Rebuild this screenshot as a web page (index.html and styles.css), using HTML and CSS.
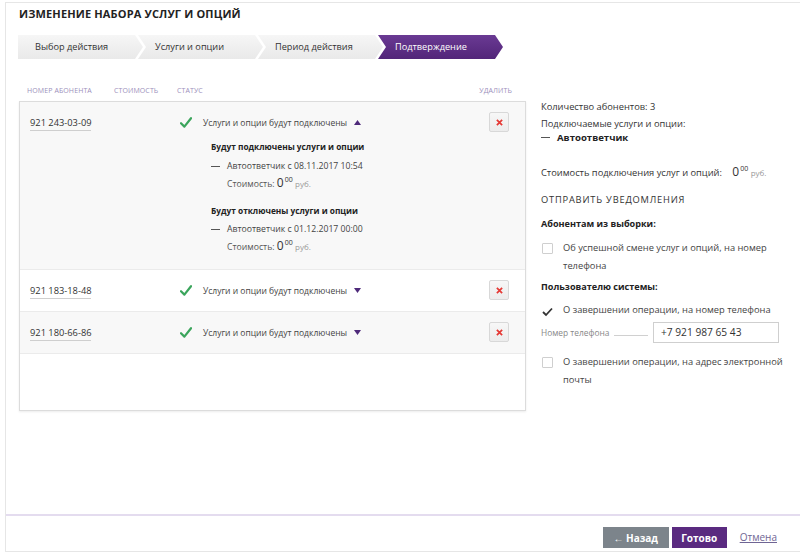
FILE: index.html
```html
<!DOCTYPE html>
<html lang="ru">
<head>
<meta charset="utf-8">
<title>Изменение набора услуг и опций</title>
<link rel="stylesheet" href="styles.css">
</head>
<body>
<div class="modal">
  <header class="head">
    <h1 class="title">ИЗМЕНЕНИЕ НАБОРА УСЛУГ И ОПЦИЙ</h1>
    <ol class="steps">
      <li class="step first">Выбор действия</li>
      <li class="step">Услуги и опции</li>
      <li class="step">Период действия</li>
      <li class="step active">Подтверждение</li>
    </ol>
  </header>

  <main class="content">
    <section class="left">
      <div class="thead">
        <span class="th th-num">НОМЕР АБОНЕНТА</span>
        <span class="th th-cost">СТОИМОСТЬ</span>
        <span class="th th-status">СТАТУС</span>
        <span class="th th-del">УДАЛИТЬ</span>
      </div>
      <div class="tbox">
        <div class="row shaded">
          <div class="row-main">
            <span class="num">921 243-03-09</span>
            <svg class="check" viewBox="0 0 12 11" width="12" height="11"><path d="M1 6.2 L4.4 9.6 L11 1.2" fill="none" stroke="#3ba55c" stroke-width="2.2" stroke-linecap="round" stroke-linejoin="round"/></svg>
            <span class="status">Услуги и опции будут подключены</span>
            <svg class="caret" viewBox="0 0 7 5" width="7" height="5"><path d="M0 5 L3.5 0 L7 5 Z" fill="#4e2a7a"/></svg>
            <button class="del" type="button"><svg viewBox="0 0 8 8" width="7" height="7"><path d="M1 1 L7 7 M7 1 L1 7" stroke="#e53935" stroke-width="2"/></svg></button>
          </div>
          <div class="details">
            <div class="d-head">Будут подключены услуги и опции</div>
            <div class="d-item"><span class="dash"></span>Автоответчик с 08.11.2017 10:54</div>
            <div class="d-cost">Стоимость: <span class="price">0<sup>00</sup></span> <span class="rub">руб.</span></div>
            <div class="d-head second">Будут отключены услуги и опции</div>
            <div class="d-item tight"><span class="dash"></span>Автоответчик с 01.12.2017 00:00</div>
            <div class="d-cost">Стоимость: <span class="price">0<sup>00</sup></span> <span class="rub">руб.</span></div>
          </div>
        </div>
        <div class="row">
          <div class="row-main">
            <span class="num">921 183-18-48</span>
            <svg class="check" viewBox="0 0 12 11" width="12" height="11"><path d="M1 6.2 L4.4 9.6 L11 1.2" fill="none" stroke="#3ba55c" stroke-width="2.2" stroke-linecap="round" stroke-linejoin="round"/></svg>
            <span class="status">Услуги и опции будут подключены</span>
            <svg class="caret" viewBox="0 0 7 5" width="7" height="5"><path d="M0 0 L7 0 L3.5 5 Z" fill="#4e2a7a"/></svg>
            <button class="del" type="button"><svg viewBox="0 0 8 8" width="7" height="7"><path d="M1 1 L7 7 M7 1 L1 7" stroke="#e53935" stroke-width="2"/></svg></button>
          </div>
        </div>
        <div class="row shaded">
          <div class="row-main">
            <span class="num">921 180-66-86</span>
            <svg class="check" viewBox="0 0 12 11" width="12" height="11"><path d="M1 6.2 L4.4 9.6 L11 1.2" fill="none" stroke="#3ba55c" stroke-width="2.2" stroke-linecap="round" stroke-linejoin="round"/></svg>
            <span class="status">Услуги и опции будут подключены</span>
            <svg class="caret" viewBox="0 0 7 5" width="7" height="5"><path d="M0 0 L7 0 L3.5 5 Z" fill="#4e2a7a"/></svg>
            <button class="del" type="button"><svg viewBox="0 0 8 8" width="7" height="7"><path d="M1 1 L7 7 M7 1 L1 7" stroke="#e53935" stroke-width="2"/></svg></button>
          </div>
        </div>
      </div>
    </section>

    <aside class="right">
      <p class="r-line">Количество абонентов: 3</p>
      <p class="r-line">Подключаемые услуги и опции:</p>
      <p class="r-service"><span class="dash"></span>Автоответчик</p>
      <p class="r-cost">Стоимость подключения услуг и опций: <span class="price big">0<sup>00</sup></span> <span class="rub">руб.</span></p>
      <h2 class="r-title">ОТПРАВИТЬ УВЕДОМЛЕНИЯ</h2>
      <h3 class="r-sub">Абонентам из выборки:</h3>
      <label class="cb"><span class="box"></span><span class="cb-text">Об успешной смене услуг и опций, на номер телефона</span></label>
      <h3 class="r-sub second">Пользователю системы:</h3>
      <label class="cb single"><span class="box checked"><svg viewBox="0 0 11 10" width="11" height="10"><path d="M1 5 L4 8 L10 1.5" fill="none" stroke="#333" stroke-width="1.8"/></svg></span><span class="cb-text">О завершении операции, на номер телефона</span></label>
      <div class="phone">
        <span class="phone-label">Номер телефона</span>
        <span class="leader"></span>
        <span class="input">+7 921 987 65 43</span>
      </div>
      <label class="cb last"><span class="box"></span><span class="cb-text">О завершении операции, на адрес электронной почты</span></label>
    </aside>
  </main>

  <footer class="foot">
    <button class="btn back" type="button">← Назад</button>
    <button class="btn done" type="button">Готово</button>
    <a class="cancel" href="#">Отмена</a>
  </footer>
</div>
</body>
</html>
```

FILE: styles.css
```css
* { box-sizing: border-box; margin: 0; padding: 0; }
html, body { width: 800px; height: 554px; overflow: hidden; background: #fff; }
body { font-family: "Open Sans", "Noto Sans", sans-serif; color: #333; font-size: 10px; }

.modal {
  margin: 2px 0 0 5px;
  height: 550px;
  border: 1px solid #e6e6e6;
  border-right: 0;
  display: flex;
  flex-direction: column;
  background: #fff;
}

.head { padding: 3px 0 0 13px; }
.title { font-size: 11px; font-weight: 700; color: #222; line-height: 16px; letter-spacing: 0.15px; }

.steps { list-style: none; display: flex; margin: 13px 0 0 -1px; }
.step {
  width: 125px;
  height: 24px;
  line-height: 24px;
  padding-left: 17px;
  font-size: 9.2px;
  color: #333;
  background: linear-gradient(#f6f6f6, #e9e9e9);
  margin-left: -5px;
  clip-path: polygon(0 0, calc(100% - 8px) 0, 100% 50%, calc(100% - 8px) 100%, 0 100%, 8px 50%);
}
.step.first { margin-left: 0; clip-path: polygon(0 0, calc(100% - 8px) 0, 100% 50%, calc(100% - 8px) 100%, 0 100%); }
.step.active { background: linear-gradient(#6a3a93, #522579); color: #fff; }

.content { flex: 1; display: flex; padding: 27px 0 0 13px; }

.left { width: 507px; }
.thead { display: flex; height: 10px; line-height: 10px; padding: 0 14px 0 8px; }
.th { font-size: 7px; color: #9c8fbb; letter-spacing: 0.1px; }
.th-num { width: 87px; }
.th-cost { width: 63px; }
.th-status { flex: 1; }

.tbox {
  margin-top: 5px;
  height: 310px;
  border: 1px solid #dcdcdc;
  box-shadow: 0 1px 2px rgba(0,0,0,0.08);
  background: #fff;
}
.row { padding: 10px 16px 11px 10px; border-bottom: 1px solid #ebebeb; }
.row.shaded { background: #f8f8f8; }
.row-main { display: flex; align-items: center; height: 20px; font-size: 8.5px; }
.num {
  width: 150px;
  font-size: 9.3px;
  color: #333;
  padding-bottom: 2px;
  margin-top: 2px;
  background: linear-gradient(#cfcfcf, #cfcfcf) no-repeat 0 100% / 61px 1px;
}
.check { margin-right: 11px; flex: none; }
.status { color: #444; }
.caret { margin-left: 7px; }
.del {
  margin-left: auto;
  width: 20px;
  height: 20px;
  border: 1px solid #d8d8d8;
  border-radius: 2px;
  background: linear-gradient(#f7f7f7, #ececec);
  display: flex;
  align-items: center;
  justify-content: center;
}

.details { margin: 6px 0 0 181px; padding-bottom: 3px; font-size: 8.7px; }
.d-head { line-height: 17px; font-weight: 700; color: #222; font-size: 8.3px; }
.d-head.second { margin-top: 10px; }
.d-item { line-height: 17px; margin-top: 3px; color: #444; display: flex; align-items: center; }
.d-item.tight { margin-top: 2px; }
.dash { display: inline-block; width: 9px; height: 1px; background: #555; margin-right: 7px; }
.d-cost { height: 17px; line-height: 17px; padding-left: 16px; color: #555; }
.price { font-size: 12px; color: #333; line-height: 0; }
.price sup { font-size: 7px; line-height: 0; vertical-align: 5px; margin-left: 1px; }
.rub { font-size: 8px; color: #999; }

.right { margin-left: 15px; width: 250px; padding-top: 11.5px; font-size: 9.3px; color: #333; }
.r-line { line-height: 17px; }
.r-service { line-height: 12px; font-weight: 700; font-size: 9.6px; color: #222; display: flex; align-items: center; }
.r-cost { height: 18px; line-height: 18px; margin-top: 20.5px; }
.price.big { font-size: 12px; margin-left: 8px; }
.r-title { margin-top: 10px; line-height: 16px; font-size: 9.3px; font-weight: 400; letter-spacing: 0.8px; color: #333; }
.r-sub { margin-top: 8px; line-height: 16px; font-size: 9.1px; font-weight: 700; color: #222; }
.r-sub.second { margin-top: 4px; }
.cb { display: flex; margin-top: 7px; line-height: 18px; color: #444; }
.cb.single { margin-top: 6px; }
.cb.last { margin-top: 10px; }
.box { flex: none; width: 11px; height: 11px; margin: 3.5px 10px 0 1px; border: 1px solid #cfcfcf; border-radius: 1px; background: #fff; }
.box.checked { border: 0; background: none; }
.phone { display: flex; align-items: center; margin-top: 3px; height: 21px; }
.phone-label { font-size: 8.4px; color: #888; }
.leader { flex: 1; height: 1px; margin: 6px 5px 0 5px; background: #d0d0d0; }
.input { width: 126px; height: 21px; line-height: 19px; border: 1px solid #cfcfcf; padding-left: 7px; font-size: 10.2px; color: #333; margin-right: 12px; }

.foot {
  height: 37px;
  border-top: 2px solid #e4dcef;
  display: flex;
  align-items: flex-start;
  justify-content: flex-end;
  padding: 11px 23px 0 0;
}
.btn { height: 21px; border: 0; font-family: inherit; font-size: 10px; font-weight: 700; color: #fff; }
.btn.back { width: 66px; background: #7c848b; }
.btn.done { width: 55px; margin-left: 3px; background: #5a2a80; }
.cancel { margin-left: 13px; line-height: 21px; font-size: 10px; color: #6f6594; }
```
